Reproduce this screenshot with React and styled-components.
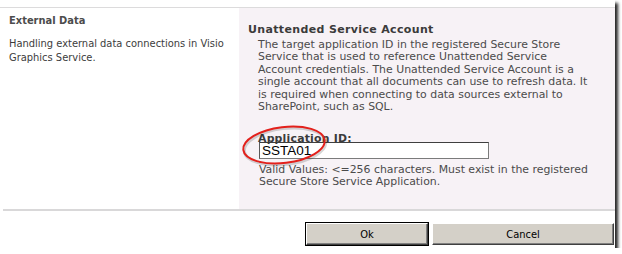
import React from 'react';
import styled, {createGlobalStyle} from 'styled-components';

const GlobalStyle = createGlobalStyle`
  html, body {
    margin: 0;
    padding: 0;
    background: #fff;
  }
`;

const App = () => {
  return (
      <>
        <GlobalStyle/>
        <Frame>
          <Section>
            <LeftCell>
              <SectionTitle>External Data</SectionTitle>
              <SectionHelp>
                Handling external data connections in Visio<br/>
                Graphics Service.
              </SectionHelp>
            </LeftCell>

            <RightCell>
              <FieldTitle>Unattended Service Account</FieldTitle>
              <FieldBody>
                <Description>
                  The target application ID in the registered Secure Store<br/>
                  Service that is used to reference Unattended Service<br/>
                  Account credentials. The Unattended Service Account is a<br/>
                  single account that all documents can use to refresh data. It<br/>
                  is required when connecting to data sources external to<br/>
                  SharePoint, such as SQL.
                </Description>

                <Label>Application ID:</Label>
                <TextInput defaultValue="SSTA01"/>
                <Hint>
                  Valid Values: &lt;=256 characters. Must exist in the registered<br/>
                  Secure Store Service Application.
                </Hint>

                <Mark viewBox="0 0 90 42">
                  <ellipse cx="46" cy="22.5" rx="41" ry="18"
                           transform="rotate(-7 46 22.5)"
                           fill="none" stroke="rgba(0,0,0,.16)" strokeWidth="3"/>
                  <ellipse cx="45" cy="21" rx="41" ry="18"
                           transform="rotate(-7 45 21)"
                           fill="none" stroke="#e3201b" strokeWidth="2"/>
                </Mark>
              </FieldBody>
            </RightCell>
          </Section>

          <Separator/>

          <ButtonRow>
            <Button primary>Ok</Button>
            <Button wide>Cancel</Button>
          </ButtonRow>
        </Frame>
      </>
  );
};

const Frame = styled.div`
  position: relative;
  width: 615px;
  height: 248px;
  box-sizing: border-box;
  padding-top: 7px;
  background: #fff;
  box-shadow: 3px 3px 3px rgba(0, 0, 0, .85);
  font-family: "DejaVu Sans", Verdana, sans-serif;
`;

const Section = styled.div`
  display: flex;
  height: 201px;
  border-top: 1px solid #dcdbdc;
`;

const LeftCell = styled.div`
  width: 239px;
  box-sizing: border-box;
  padding: 6px 0 0 9px;
  font-family: "DejaVu Sans Condensed", "Liberation Sans", sans-serif;
`;

const SectionTitle = styled.div`
  font-size: 11px;
  font-weight: bold;
  color: #4c4c4c;
  line-height: 14px;
`;

const SectionHelp = styled.div`
  margin-top: 9px;
  font-size: 11px;
  line-height: 14px;
  color: #3c3c3c;
`;

const RightCell = styled.div`
  flex: 1;
  background: #f7f2f6;
  padding: 15px 0 0 9px;
`;

const FieldTitle = styled.div`
  font-size: 11px;
  font-weight: bold;
  letter-spacing: .35px;
  color: #3b3b3b;
  line-height: 13px;
`;

const FieldBody = styled.div`
  position: relative;
  padding: 3px 0 0 10px;
  color: #4b4b4b;
  font-size: 10.9px;
  line-height: 12.4px;
  white-space: nowrap;
`;

const Description = styled.div``;

const Label = styled.div`
  margin-top: 20px;
  font-weight: bold;
  letter-spacing: .2px;
  color: #3b3b3b;
`;

const TextInput = styled.input`
  display: block;
  width: 230px;
  height: 17px;
  box-sizing: border-box;
  margin: -4px 0 0 1px;
  padding: 0 2px;
  border: 1px solid #7b7b7b;
  border-top-color: #3f3f3f;
  border-left-color: #5a5a5a;
  background: #fff;
  font-family: "Liberation Sans", Arial, sans-serif;
  font-size: 13.5px;
  color: #000;
  outline: none;
`;

const Hint = styled.div`
  margin-top: 5px;
  margin-left: 1px;
`;

const Mark = styled.svg`
  position: absolute;
  left: -9px;
  top: 88px;
  width: 90px;
  height: 42px;
  overflow: visible;
`;

const Separator = styled.div`
  height: 2px;
  margin-left: 3px;
  background: #d9d8d9;
`;

const ButtonRow = styled.div`
  display: flex;
  justify-content: flex-end;
  gap: 4px;
  padding: 12px 1px 0 0;
`;

const Button = styled.button`
  width: ${p => (p.wide ? '182px' : '122px')};
  height: 22px;
  box-sizing: border-box;
  padding: 0;
  background: #d4d0c8;
  font-family: "DejaVu Sans Condensed", "Liberation Sans", sans-serif;
  font-size: 11px;
  color: #000;
  border: 1px solid;
  border-color: #fff #404040 #404040 #fff;
  box-shadow: inset -1px -1px 0 #808080;
  outline: ${p => (p.primary ? '1px solid #000' : 'none')};
  outline-offset: 0;
`;

export default App;
